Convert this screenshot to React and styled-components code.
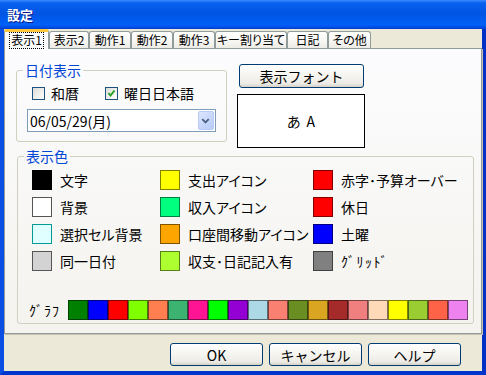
import React from "react";
import styled, { createGlobalStyle } from "styled-components";

const GlobalStyle = createGlobalStyle`
  html, body { margin: 0; padding: 0; }
  body {
    font-family: "Noto Sans CJK JP", "Noto Sans", sans-serif;
    font-size: 14px;
    font-feature-settings: "palt";
    background: #ece9d8;
  }
  * { box-sizing: border-box; }
`;

const tabs = [
  { label: "表示1", w: 45, active: true },
  { label: "表示2", w: 40 },
  { label: "動作1", w: 42 },
  { label: "動作2", w: 42 },
  { label: "動作3", w: 42 },
  { label: "キー割り当て", w: 72 },
  { label: "日記", w: 41 },
  { label: "その他", w: 43 },
];

const colorItems = [
  ["#000000", "文字"],
  ["#ffff00", "支出アイコン"],
  ["#ff0000", "赤字･予算オーバー"],
  ["#ffffff", "背景", "#555"],
  ["#00ff7f", "収入アイコン"],
  ["#ff0000", "休日"],
  ["#e0ffff", "選択セル背景", "#009a9a"],
  ["#ffa500", "口座間移動アイコン"],
  ["#0000ff", "土曜"],
  ["#d3d3d3", "同一日付", "#555"],
  ["#adff2f", "収支･日記記入有"],
  ["#808080", "ｸﾞﾘｯﾄﾞ", null, true],
];

const graphColors = [
  "#008000", "#0000ff", "#ff0000", "#7fff00", "#ff7f50",
  "#3cb371", "#ff1493", "#00ff00", "#9400d3", "#add8e6",
  "#fa8072", "#6b8e23", "#daa520", "#a52a2a", "#f08080",
  "#ffdab9", "#ffff00", "#9acd32", "#ff6347", "#ee82ee",
];

export default function App() {
  return (
    <>
      <GlobalStyle />
      <Window>
        <TitleBar>設定</TitleBar>
        <Body>
          <TabStrip>
            {tabs.map((t) => (
              <Tab key={t.label} $w={t.w} $active={t.active}>
                <TabLabel $active={t.active}>{t.label}</TabLabel>
              </Tab>
            ))}
          </TabStrip>
          <Panel>
            <TopRow>
              <DateGroup>
                <Legend>日付表示</Legend>
                <CheckRow>
                  <CheckLabel $w={73}>
                    <CheckBox />
                    和暦
                  </CheckLabel>
                  <CheckLabel>
                    <CheckBox>
                      <svg width="11" height="11" viewBox="0 0 11 11">
                        <path d="M2.5 5 L4.5 7.5 L8.5 2.5" fill="none" stroke="#21a121" strokeWidth="2" />
                      </svg>
                    </CheckBox>
                    曜日日本語
                  </CheckLabel>
                </CheckRow>
                <Combo>
                  <ComboText>06/05/29(月)</ComboText>
                  <ComboButton>
                    <svg width="16" height="19" viewBox="0 0 16 19">
                      <path d="M4.5 8 L8 11.5 L11.5 8" fill="none" stroke="#4d6185" strokeWidth="2" />
                    </svg>
                  </ComboButton>
                </Combo>
              </DateGroup>
              <FontColumn>
                <FontButton>表示フォント</FontButton>
                <Preview>あ A</Preview>
              </FontColumn>
            </TopRow>
            <ColorGroup>
              <Legend $shift={-8}>表示色</Legend>
              <ColorGrid>
                {colorItems.map(([c, label, edge, narrow], i) => (
                  <ColorItem key={i}>
                    <Swatch $c={c} $edge={edge} />
                    <ItemText $narrow={narrow}>{label}</ItemText>
                  </ColorItem>
                ))}
              </ColorGrid>
              <GraphRow>
                <GraphLabel>ｸﾞﾗﾌ</GraphLabel>
                {graphColors.map((c, i) => (
                  <Swatch key={i} $c={c} />
                ))}
              </GraphRow>
            </ColorGroup>
          </Panel>
          <Footer>
            <XPButton>OK</XPButton>
            <XPButton>キャンセル</XPButton>
            <XPButton>ヘルプ</XPButton>
          </Footer>
        </Body>
      </Window>
    </>
  );
}

const Window = styled.div`
  width: 486px;
  height: 375px;
  display: flex;
  flex-direction: column;
  background: #ece9d8;
  overflow: hidden;
`;

const TitleBar = styled.div`
  height: 29px;
  flex-shrink: 0;
  display: flex;
  align-items: center;
  padding-left: 7px;
  color: #fff;
  font-weight: bold;
  font-size: 13px;
  text-shadow: 1px 1px #0a1883;
  background: linear-gradient(
    to bottom,
    #3a8cff 0%,
    #0a62f0 10%,
    #0054e3 45%,
    #0060f8 85%,
    #0050e6 93%,
    #003dd0 100%
  );
`;

const Body = styled.div`
  flex: 1;
  display: flex;
  flex-direction: column;
  border-style: solid;
  border-width: 0 4px 4px 4px;
  border-color: #0846dc #0030c4 #0036cc #0a4ee4;
`;

const TabStrip = styled.div`
  height: 19px;
  display: flex;
  align-items: flex-end;
`;

const Tab = styled.div`
  width: ${(p) => p.$w}px;
  height: ${(p) => (p.$active ? 20 : 17)}px;
  margin-bottom: ${(p) => (p.$active ? -1 : 0)}px;
  position: relative;
  z-index: ${(p) => (p.$active ? 2 : 1)};
  display: flex;
  align-items: center;
  justify-content: center;
  border: 1px solid #919b9c;
  border-bottom: none;
  border-top: ${(p) => (p.$active ? "3px solid #ffc83c" : "1px solid #919b9c")};
  border-radius: 3px 3px 0 0;
  background: ${(p) =>
    p.$active ? "#fcfcfe" : "linear-gradient(to bottom, #ffffff, #fafaf8 40%, #ecebe5)"};
  font-size: 12px;
  line-height: 1;
  white-space: nowrap;
  color: #000;
`;

const TabLabel = styled.span`
  padding: 1px 1px 2px;
  outline: ${(p) => (p.$active ? "1px dotted #000" : "none")};
  outline-offset: 0;
`;

const Panel = styled.div`
  height: 286px;
  border: 1px solid #919b9c;
  box-shadow: 1px 1px 0 #c5c2b2;
  background: linear-gradient(to bottom, #fcfcfe, #f4f3ee);
  padding: 14px 0 0 11px;
`;

const TopRow = styled.div`
  display: flex;
  align-items: flex-start;
  gap: 10px;
`;

const GroupBox = styled.fieldset`
  margin: 0;
  min-width: 0;
  border: 1px solid #d0d0bf;
  border-radius: 3px;
`;

const DateGroup = styled(GroupBox)`
  width: 211px;
  padding: 9px 10px 9px 10px;
`;

const ColorGroup = styled(GroupBox)`
  width: 457px;
  margin: 1px 0 0 1px;
  padding: 7px 0 3px 14px;
`;

const Legend = styled.legend`
  font-size: 14px;
  line-height: 14px;
  color: #0046d5;
  padding: 0 2px;
  margin-left: ${(p) => p.$shift ?? -4}px;
`;

const CheckRow = styled.div`
  display: flex;
  align-items: center;
  height: 14px;
  margin-left: 5px;
`;

const CheckLabel = styled.div`
  display: flex;
  align-items: center;
  gap: 6px;
  width: ${(p) => (p.$w ? `${p.$w}px` : "auto")};
  line-height: 14px;
`;

const CheckBox = styled.span`
  width: 13px;
  height: 13px;
  flex-shrink: 0;
  display: flex;
  align-items: center;
  justify-content: center;
  border: 1px solid #1c5180;
  background: linear-gradient(135deg, #dcdcd7, #ffffff);
`;

const Combo = styled.div`
  width: 189px;
  height: 23px;
  margin-top: 9px;
  display: flex;
  align-items: center;
  border: 1px solid #7f9db9;
  background: #fff;
  padding: 1px;
`;

const ComboText = styled.span`
  flex: 1;
  padding-left: 1px;
  line-height: 14px;
`;

const ComboButton = styled.span`
  width: 16px;
  height: 19px;
  display: flex;
  border: 1px solid #b9cbf3;
  border-radius: 2px;
  background: linear-gradient(135deg, #dce6fd, #b6cbf8);
  overflow: hidden;

  svg {
    margin: -1px 0 0 -1px;
  }
`;

const FontColumn = styled.div`
  width: 128px;
  display: flex;
  flex-direction: column;
`;

const XPButton = styled.button`
  width: 93px;
  height: 23px;
  padding: 0;
  font-family: inherit;
  font-size: 14px;
  line-height: 1;
  color: #000;
  border: 1px solid #003c74;
  border-radius: 3px;
  background: linear-gradient(to bottom, #ffffff 0%, #f5f4ef 50%, #ecebe6 85%, #d6d0c5 100%);
`;

const FontButton = styled(XPButton)`
  width: 125px;
  height: 24px;
  margin: 1px 0 0 2px;
`;

const Preview = styled.div`
  height: 54px;
  margin-top: 6px;
  border: 1px solid #000;
  background: #fff;
  display: flex;
  align-items: center;
  justify-content: center;
  font-size: 14px;
  word-spacing: 3px;
`;

const ColorGrid = styled.div`
  display: grid;
  grid-template-columns: 128px 153px 1fr;
  row-gap: 7px;
`;

const ColorItem = styled.div`
  display: flex;
  align-items: center;
  gap: 8px;
  height: 20px;
  white-space: nowrap;
`;

const ItemText = styled.span`
  letter-spacing: ${(p) => (p.$narrow ? "1.5px" : "0")};
`;

const Swatch = styled.span`
  width: 20px;
  height: 20px;
  flex-shrink: 0;
  background: ${(p) => p.$c};
  border: 1px solid ${(p) => p.$edge || `color-mix(in srgb, ${p.$c} 50%, #000)`};
`;

const GraphRow = styled.div`
  display: flex;
  align-items: center;
  margin: 29px 0 0 -3px;
`;

const GraphLabel = styled.span`
  width: 39px;
  line-height: 14px;
  letter-spacing: 1px;
`;

const Footer = styled.div`
  flex: 1;
  display: flex;
  justify-content: flex-end;
  align-items: flex-start;
  gap: 6px;
  padding: 9px 21px 0 0;
`;
